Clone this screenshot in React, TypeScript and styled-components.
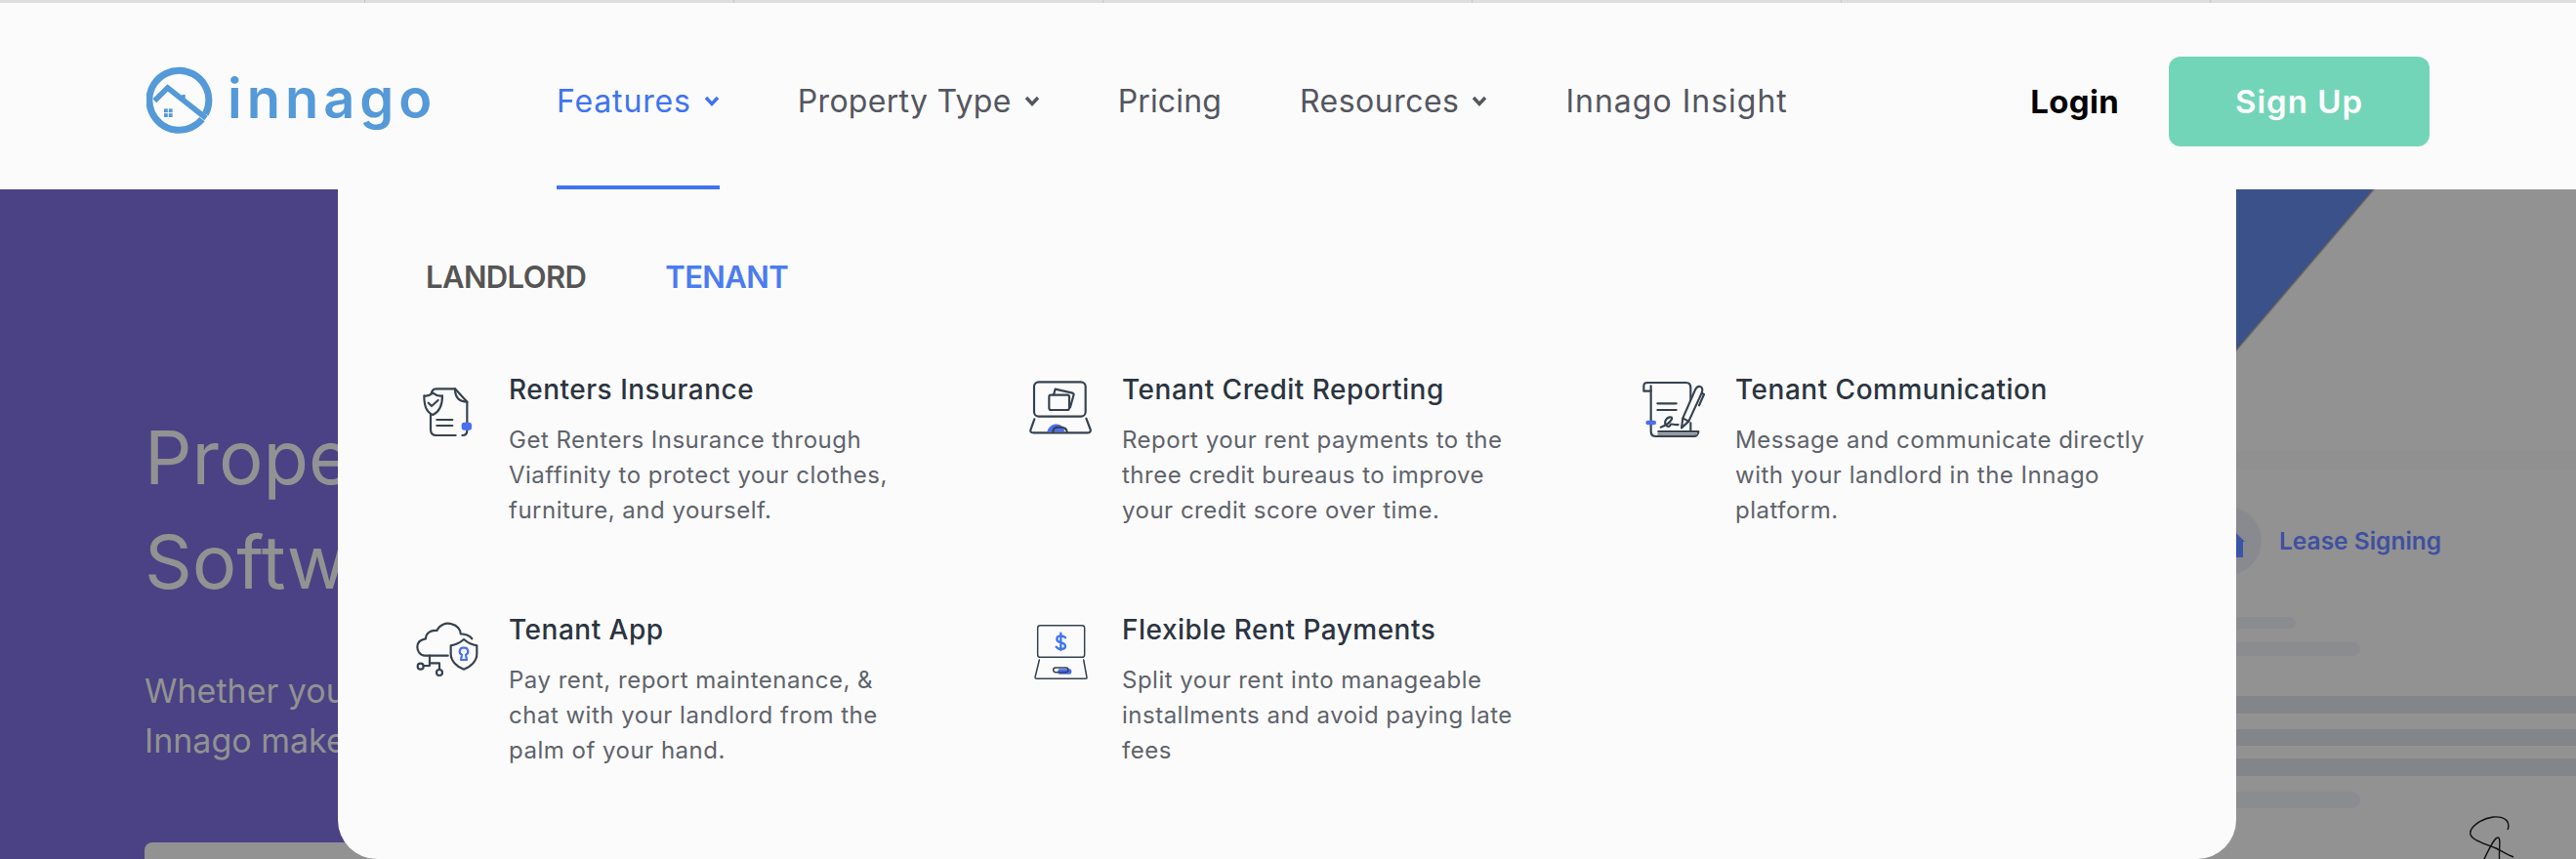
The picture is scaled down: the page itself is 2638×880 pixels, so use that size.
import React from 'react';
import styled, { createGlobalStyle } from 'styled-components';

const GlobalStyle = createGlobalStyle`
  html, body {
    margin: 0;
    padding: 0;
    background: #929292;
  }
  body {
    font-family: Inter, "Liberation Sans", sans-serif;
    overflow: hidden;
  }
`;

const Page = styled.div`
  position: relative;
  width: 2638px;
  height: 880px;
  overflow: hidden;
`;

const TopStrip = styled.div`
  height: 3px;
  background-color: #dedede;
  background-image: repeating-linear-gradient(90deg, transparent 0, transparent 377px, #c8c8c8 377px, #c8c8c8 378px);
  background-position: -4px 0;
`;

const Header = styled.header`
  display: flex;
  align-items: stretch;
  height: 191px;
  padding: 0 150px;
  box-sizing: border-box;
  background: #fbfbfb;
`;

const Logo = styled.a`
  display: flex;
  flex: none;
  align-items: center;
  gap: 15px;
  width: 294px;
  margin-right: 126px;
  padding-top: 8px;
`;

const LogoIcon = styled.svg`
  flex: none;
`;

const LogoText = styled.span`
  font-size: 56px;
  font-weight: 600;
  letter-spacing: 5px;
  color: #5499d8;
  line-height: 1;
  margin-top: -4px;
`;

const Nav = styled.nav`
  display: flex;
  gap: 80px;
`;

const NavItem = styled.a<{ $active?: boolean; $spacing: number }>`
  display: flex;
  align-items: center;
  gap: 13px;
  font-size: 32px;
  letter-spacing: ${(p) => p.$spacing}px;
  color: ${(p) => (p.$active ? '#3f74f0' : '#54565f')};
  border-bottom: 4px solid ${(p) => (p.$active ? '#3f74f0' : 'transparent')};
  padding-top: 14px;
  box-sizing: border-box;
`;

const Actions = styled.div`
  display: flex;
  align-items: center;
  gap: 51px;
  margin-left: auto;
  padding-top: 11px;
`;

const Login = styled.a`
  font-size: 33px;
  font-weight: 700;
  letter-spacing: 0.3px;
  color: #000;
`;

const SignUp = styled.a`
  display: flex;
  align-items: center;
  justify-content: center;
  width: 267px;
  height: 92px;
  border-radius: 12px;
  background: #73d5b7;
  color: #fff;
  font-size: 33px;
  font-weight: 600;
  letter-spacing: 1px;
`;

const Hero = styled.section`
  display: flex;
  height: 686px;
  overflow: hidden;
  background:
    linear-gradient(130.5deg, transparent 1847px, #5a5a5a 1848px, #929292 1850px),
    linear-gradient(90deg, #4a4284 0, #4a4284 1400px, #3a5189 2200px);
`;

const HeroCopy = styled.div`
  flex: none;
  width: 2200px;
  box-sizing: border-box;
  padding: 221px 0 0 148px;
  color: #929292;
`;

const HeroTitle = styled.h1`
  margin: 0;
  font-size: 76px;
  font-weight: 400;
  line-height: 107px;
`;

const HeroText = styled.p`
  margin: 53px 0 0;
  font-size: 34px;
  line-height: 51px;
`;

const HeroButton = styled.div`
  margin-top: 79px;
  width: 420px;
  height: 80px;
  border-radius: 8px;
  background: #929292;
`;

const HeroDoc = styled.div`
  flex: 1;
  padding-top: 267px;
`;

const DocBand = styled.div`
  height: 20px;
  background: #909090;
`;

const LeaseRow = styled.div`
  display: flex;
  align-items: center;
  gap: 18px;
  margin-top: 38px;
  padding-left: 46px;
`;

const LeaseCircle = styled.div`
  display: flex;
  align-items: center;
  justify-content: center;
  width: 70px;
  height: 70px;
  border-radius: 50%;
  background: #898a90;
`;

const LeaseLabel = styled.span`
  font-size: 24.5px;
  font-weight: 600;
  color: #3f50a0;
`;

const DocLine = styled.div<{ $width?: number; $top: number; $height: number; $light?: boolean }>`
  width: ${(p) => (p.$width ? `${p.$width}px` : '100%')};
  height: ${(p) => p.$height}px;
  margin-top: ${(p) => p.$top}px;
  background: ${(p) => (p.$light ? '#8b8c90' : '#84858b')};
  border-radius: ${(p) => (p.$width ? '10px' : '0')};
`;

const Signature = styled.svg`
  display: block;
  margin: 6px 0 0 328px;
`;

const Dropdown = styled.div`
  position: absolute;
  top: 194px;
  left: 346px;
  width: 1944px;
  height: 686px;
  box-sizing: border-box;
  padding: 70px 0 0 79px;
  background: #fbfbfb;
  border-radius: 0 0 40px 40px;
`;

const Tabs = styled.div`
  display: flex;
  gap: 81px;
  padding-left: 11px;
`;

const Tab = styled.span<{ $active?: boolean }>`
  font-size: 31px;
  font-weight: 600;
  line-height: 40px;
  letter-spacing: -0.6px;
  color: ${(p) => (p.$active ? '#4a7cf0' : '#555555')};
`;

const FeatureGrid = styled.div`
  display: grid;
  grid-template-columns: repeat(3, 628px);
  row-gap: 86px;
  margin-top: 77px;
`;

const Feature = styled.div`
  display: flex;
`;

const FeatureIcon = styled.svg<{ $stroke?: number }>`
  flex: none;
  width: 96px;
  height: 80px;
  margin-top: 4px;
  fill: none;
  stroke: #36424f;
  stroke-width: ${(p) => p.$stroke ?? 6.5};
  stroke-linecap: round;
  stroke-linejoin: round;
`;

const FeatureTitle = styled.div`
  font-size: 28px;
  font-weight: 500;
  line-height: 36px;
  color: #2b3440;
  letter-spacing: 0.5px;
`;

const FeatureText = styled.div`
  margin-top: 16px;
  font-size: 24px;
  line-height: 36px;
  letter-spacing: 0.5px;
  color: #5f636b;
  white-space: pre-line;
`;

const Chevron = ({ color }: { color: string }) => (
  <svg width="16" height="11" viewBox="0 0 16 11" fill="none">
    <path d="M2 2l6 6.5L14 2" stroke={color} strokeWidth="3.4" />
  </svg>
);

const LogoMark = () => (
  <LogoIcon width="68" height="69" viewBox="0 0 68 69" fill="none" stroke="#5499d8">
    <path d="M60.4 48.8A30.5 30.5 0 1 0 56.9 54.1" strokeWidth="7" />
    <path d="M8.3 35.3L21.7 22L61 53" strokeWidth="5.5" />
    <path d="M38 29V36" strokeWidth="3.5" />
    <g fill="#5499d8" stroke="none">
      <rect x="18" y="43.4" width="3.8" height="3.8" />
      <rect x="22.8" y="43.4" width="3.8" height="3.8" />
      <rect x="18" y="48.2" width="3.8" height="3.8" />
      <rect x="22.8" y="48.2" width="3.8" height="3.8" />
    </g>
  </LogoIcon>
);

const BLUE = '#4a6ff0';

const icons = {
  insurance: (
    <FeatureIcon viewBox="75 45 288 240">
      <path d="M125 105C125 92 130 85 140 85H198L235 125V212C235 222 230 228 220 228M200 228H140C130 228 123 222 123 210V160" />
      <path d="M198 85C198 110 210 125 235 125" />
      <path d="M142 180H190M142 198H190" />
      <rect x="218" y="188" width="31" height="24" rx="8" fill={BLUE} stroke="none" />
      <path d="M130 98C120 106 112 108 103 106C103 135 108 155 130 165C152 155 159 135 159 106C150 108 140 106 130 98Z" fill="#fbfbfb" />
      <path d="M116 128L126 138L146 120" />
    </FeatureIcon>
  ),
  credit: (
    <FeatureIcon viewBox="69 45 288 240">
      <rect x="87" y="64" width="158" height="106" rx="14" />
      <path d="M88 178L76 212C75 218 78 220 85 220H250C258 220 262 216 260 210L247 176" />
      <path d="M127 216C135 190 165 186 178 206L180 216Z" fill={BLUE} stroke="none" />
      <path d="M145 218C145 206 150 203 165 203C180 203 188 206 188 218" />
      <path d="M147 103L152 86L205 98C209 100 210 102 208 106L198 142" />
      <rect x="133" y="104" width="62" height="46" rx="6" />
    </FeatureIcon>
  ),
  communication: (
    <FeatureIcon viewBox="63 45 288 240">
      <path d="M92 92H70V76C70 70 75 66 82 66H200C210 66 214 72 214 82V120M214 190V214" />
      <path d="M92 76V215C92 226 98 231 108 231H225C232 231 238 224 238 216H115" />
      <path d="M115 224H232" stroke="#7d858c" />
      <path d="M112 130H170M112 150H170" />
      <rect x="76" y="182" width="32" height="14" rx="7" fill={BLUE} stroke="none" />
      <path d="M122 203C140 197 152 186 156 178C160 168 142 170 136 184C132 200 150 206 152 195C154 190 165 198 176 195" />
      <path d="M228 88L190 175L186 205L208 185L248 98C252 88 250 80 243 78C236 76 232 80 228 88Z" fill="#fbfbfb" />
      <path d="M248 98L255 102L240 136M190 175L208 185" />
    </FeatureIcon>
  ),
  app: (
    <FeatureIcon viewBox="75 33 288 240">
      <path d="M176 155H105C90 155 82 140 82 128C82 112 95 105 108 103C108 85 125 75 142 78C150 60 170 52 188 58C205 62 215 75 215 88C230 88 245 95 250 103" />
      <path d="M120 155V186H101M120 178H150V198" />
      <circle cx="92" cy="188" r="9" />
      <circle cx="150" cy="207" r="9" />
      <path d="M225 105C210 118 200 122 185 124V150C185 172 205 190 225 197C245 190 265 172 265 150V124C250 122 240 118 225 105Z" />
      <path d="M225 131A11 11 0 0 1 231 152L234 168H216L219 152A11 11 0 0 1 225 131Z" stroke={BLUE} />
    </FeatureIcon>
  ),
  payments: (
    <FeatureIcon viewBox="69 33 288 240" $stroke={4.5}>
      <rect x="98" y="62" width="144" height="98" rx="8" />
      <path d="M103 168L90 222C90 225 92 226 95 226H245C248 226 250 225 249 222L239 168" />
      <rect x="160" y="196" width="42" height="16" rx="6" fill={BLUE} stroke="none" />
      <rect x="146" y="192" width="46" height="14" rx="7" />
      <path d="M183 100C176 92 157 91 157 104C157 120 183 110 183 126C183 138 162 137 155 128M169 86V138" stroke="#3f74f0" strokeWidth="7" />
    </FeatureIcon>
  ),
};

const features = [
  { icon: icons.insurance, title: 'Renters Insurance', text: 'Get Renters Insurance through\nViaffinity to protect your clothes,\nfurniture, and yourself.' },
  { icon: icons.credit, title: 'Tenant Credit Reporting', text: 'Report your rent payments to the\nthree credit bureaus to improve\nyour credit score over time.' },
  { icon: icons.communication, title: 'Tenant Communication', text: 'Message and communicate directly\nwith your landlord in the Innago\nplatform.' },
  { icon: icons.app, title: 'Tenant App', text: 'Pay rent, report maintenance, &\nchat with your landlord from the\npalm of your hand.' },
  { icon: icons.payments, title: 'Flexible Rent Payments', text: 'Split your rent into manageable\ninstallments and avoid paying late\nfees' },
];

const App = () => (
  <Page>
    <GlobalStyle />
    <TopStrip />
    <Header>
      <Logo>
        <LogoMark />
        <LogoText>innago</LogoText>
      </Logo>
      <Nav>
        <NavItem $active $spacing={0.85}>
          Features <Chevron color="#3f74f0" />
        </NavItem>
        <NavItem $spacing={0.3}>
          Property Type <Chevron color="#54565f" />
        </NavItem>
        <NavItem $spacing={0.15}>Pricing</NavItem>
        <NavItem $spacing={0.48}>
          Resources <Chevron color="#54565f" />
        </NavItem>
        <NavItem $spacing={1}>Innago Insight</NavItem>
      </Nav>
      <Actions>
        <Login>Login</Login>
        <SignUp>Sign Up</SignUp>
      </Actions>
    </Header>
    <Hero>
      <HeroCopy>
        <HeroTitle>
          Property Management
          <br />
          Software
        </HeroTitle>
        <HeroText>
          Whether you manage one unit or many,
          <br />
          Innago makes it simple.
        </HeroText>
        <HeroButton />
      </HeroCopy>
      <HeroDoc>
        <DocBand />
        <LeaseRow>
          <LeaseCircle>
            <svg width="36" height="34" viewBox="0 0 36 34">
              <path d="M18 0L36 18H34V34H2V18H0Z" fill="#3a55a5" />
            </svg>
          </LeaseCircle>
          <LeaseLabel>Lease Signing</LeaseLabel>
        </LeaseRow>
        <DocLine $width={151} $top={43} $height={12} $light />
        <DocLine $width={217} $top={14} $height={14} $light />
        <DocLine $top={41} $height={18} />
        <DocLine $top={16} $height={17} />
        <DocLine $top={13} $height={18} />
        <DocLine $width={217} $top={16} $height={17} $light />
        <Signature width="50" height="50" viewBox="0 0 50 50" fill="none" stroke="#111" strokeWidth="1.4">
          <path d="M40 16C43 8 38 2 25 3C12 5 0 14 2 21C4 27 16 30 28 35C34 38 40 42 46 44" />
          <path d="M14 50C20 38 26 24 30 24C34 24 30 40 32 50" />
        </Signature>
      </HeroDoc>
    </Hero>
    <Dropdown>
      <Tabs>
        <Tab>LANDLORD</Tab>
        <Tab $active>TENANT</Tab>
      </Tabs>
      <FeatureGrid>
        {features.map((f) => (
          <Feature key={f.title}>
            {f.icon}
            <div>
              <FeatureTitle>{f.title}</FeatureTitle>
              <FeatureText>{f.text}</FeatureText>
            </div>
          </Feature>
        ))}
      </FeatureGrid>
    </Dropdown>
  </Page>
);

export default App;
